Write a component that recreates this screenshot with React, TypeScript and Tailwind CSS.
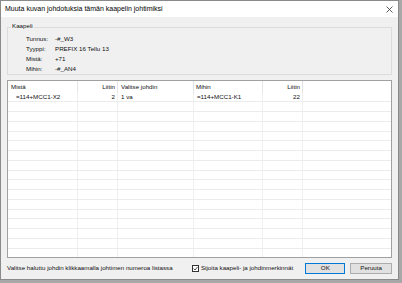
import React from "react";

const font = { fontFamily: '"Liberation Sans", Arial, sans-serif' };

function Row({ a, b, c, d, e }: { a?: string; b?: string; c?: string; d?: string; e?: string }) {
  return (
    <div className="flex h-[9.75px] border-b border-[#ececec] items-center leading-none">
      <div className="w-[70px] pl-[8px] border-r border-[#f0f0f0] h-full flex items-center">{a}</div>
      <div className="w-[40px] pr-[2px] text-right border-r border-[#f0f0f0] h-full flex items-center justify-end">{b}</div>
      <div className="w-[76px] pl-[3px] border-r border-[#f0f0f0] h-full flex items-center">{c}</div>
      <div className="w-[69px] pl-[3px] border-r border-[#f0f0f0] h-full flex items-center">{d}</div>
      <div className="w-[40px] pr-[2px] text-right border-r border-[#f0f0f0] h-full flex items-center justify-end">{e}</div>
      <div className="flex-1 h-full" />
    </div>
  );
}

export default function App() {
  const rows = Array.from({ length: 16 });
  return (
    <div className="w-[402px] h-[283px] bg-[#a8a8a8] overflow-hidden text-[6.2px] text-[#111]" style={font}>
      <div className="w-[399px] h-[280px] border border-[#8a8a8a] bg-[#f0f0f0] flex flex-col">
        <div className="h-[16px] bg-white flex items-center pl-[4px] pr-[4px] justify-between">
          <span className="text-[7px] text-black">Muuta kuvan johdotuksia tämän kaapelin johtimiksi</span>
          <svg width="7" height="7" viewBox="0 0 7 7" className="mr-[1px]">
            <path d="M0.5 0.5 L6.5 6.5 M6.5 0.5 L0.5 6.5" stroke="#333" strokeWidth="0.8" />
          </svg>
        </div>
        <div className="px-[6px] pt-[10px]">
          <div className="relative border border-[#dcdcdc] h-[48px] pt-[6px] pl-[18px]">
            <span className="absolute -top-[5px] left-[3px] bg-[#f0f0f0] px-[1px] leading-none">Kaapeli</span>
            <div className="grid grid-cols-[29px_1fr] auto-rows-[10px] items-center leading-none">
              <span>Tunnus:</span><span>-#_W3</span>
              <span>Tyyppi:</span><span>PREFIX 16 Tellu 13</span>
              <span>Mistä:</span><span>+71</span>
              <span>Mihin:</span><span>-#_AN4</span>
            </div>
          </div>
        </div>
        <div className="px-[6px] pt-[5px]">
          <div className="h-[178px] bg-white border border-[#a0a0a0] overflow-hidden">
            <div className="flex h-[11.5px] items-center leading-none">
              <div className="w-[70px] pl-[3px] border-r border-[#e5e5e5] h-full flex items-center">Mistä</div>
              <div className="w-[40px] pr-[2px] border-r border-[#e5e5e5] h-full flex items-center justify-end">Liitin</div>
              <div className="w-[76px] pl-[3px] border-r border-[#e5e5e5] h-full flex items-center">Valitse johdin</div>
              <div className="w-[69px] pl-[2px] border-r border-[#e5e5e5] h-full flex items-center">Mihin</div>
              <div className="w-[40px] pr-[2px] border-r border-[#e5e5e5] h-full flex items-center justify-end">Liitin</div>
              <div className="flex-1" />
            </div>
            <Row a="=114+MCC1-X2" b="2" c="1 va" d="=114+MCC1-K1" e="22" />
            {rows.map((_, i) => (
              <Row key={i} />
            ))}
          </div>
        </div>
        <div className="flex items-center px-[6px] mt-[4px] h-[12px] leading-none">
          <span className="w-[186px] whitespace-nowrap">Valitse haluttu johdin klikkaamalla johtimen numeroa listassa</span>
          <span className="w-[7px] h-[7px] border border-[#333] bg-white flex items-center justify-center">
            <svg width="5" height="5" viewBox="0 0 5 5">
              <path d="M0.6 2.6 L2 4 L4.5 1" stroke="#222" strokeWidth="0.8" fill="none" />
            </svg>
          </span>
          <span className="ml-[2px] w-[105px] whitespace-nowrap">Sijoita kaapeli- ja johdinmerkinnät</span>
          <button className="w-[40px] h-[11px] bg-[#e1e1e1] border border-[#0078d7] leading-none">OK</button>
          <button className="ml-[5px] w-[42px] h-[11px] bg-[#e1e1e1] border border-[#adadad] leading-none">Peruuta</button>
        </div>
      </div>
    </div>
  );
}
